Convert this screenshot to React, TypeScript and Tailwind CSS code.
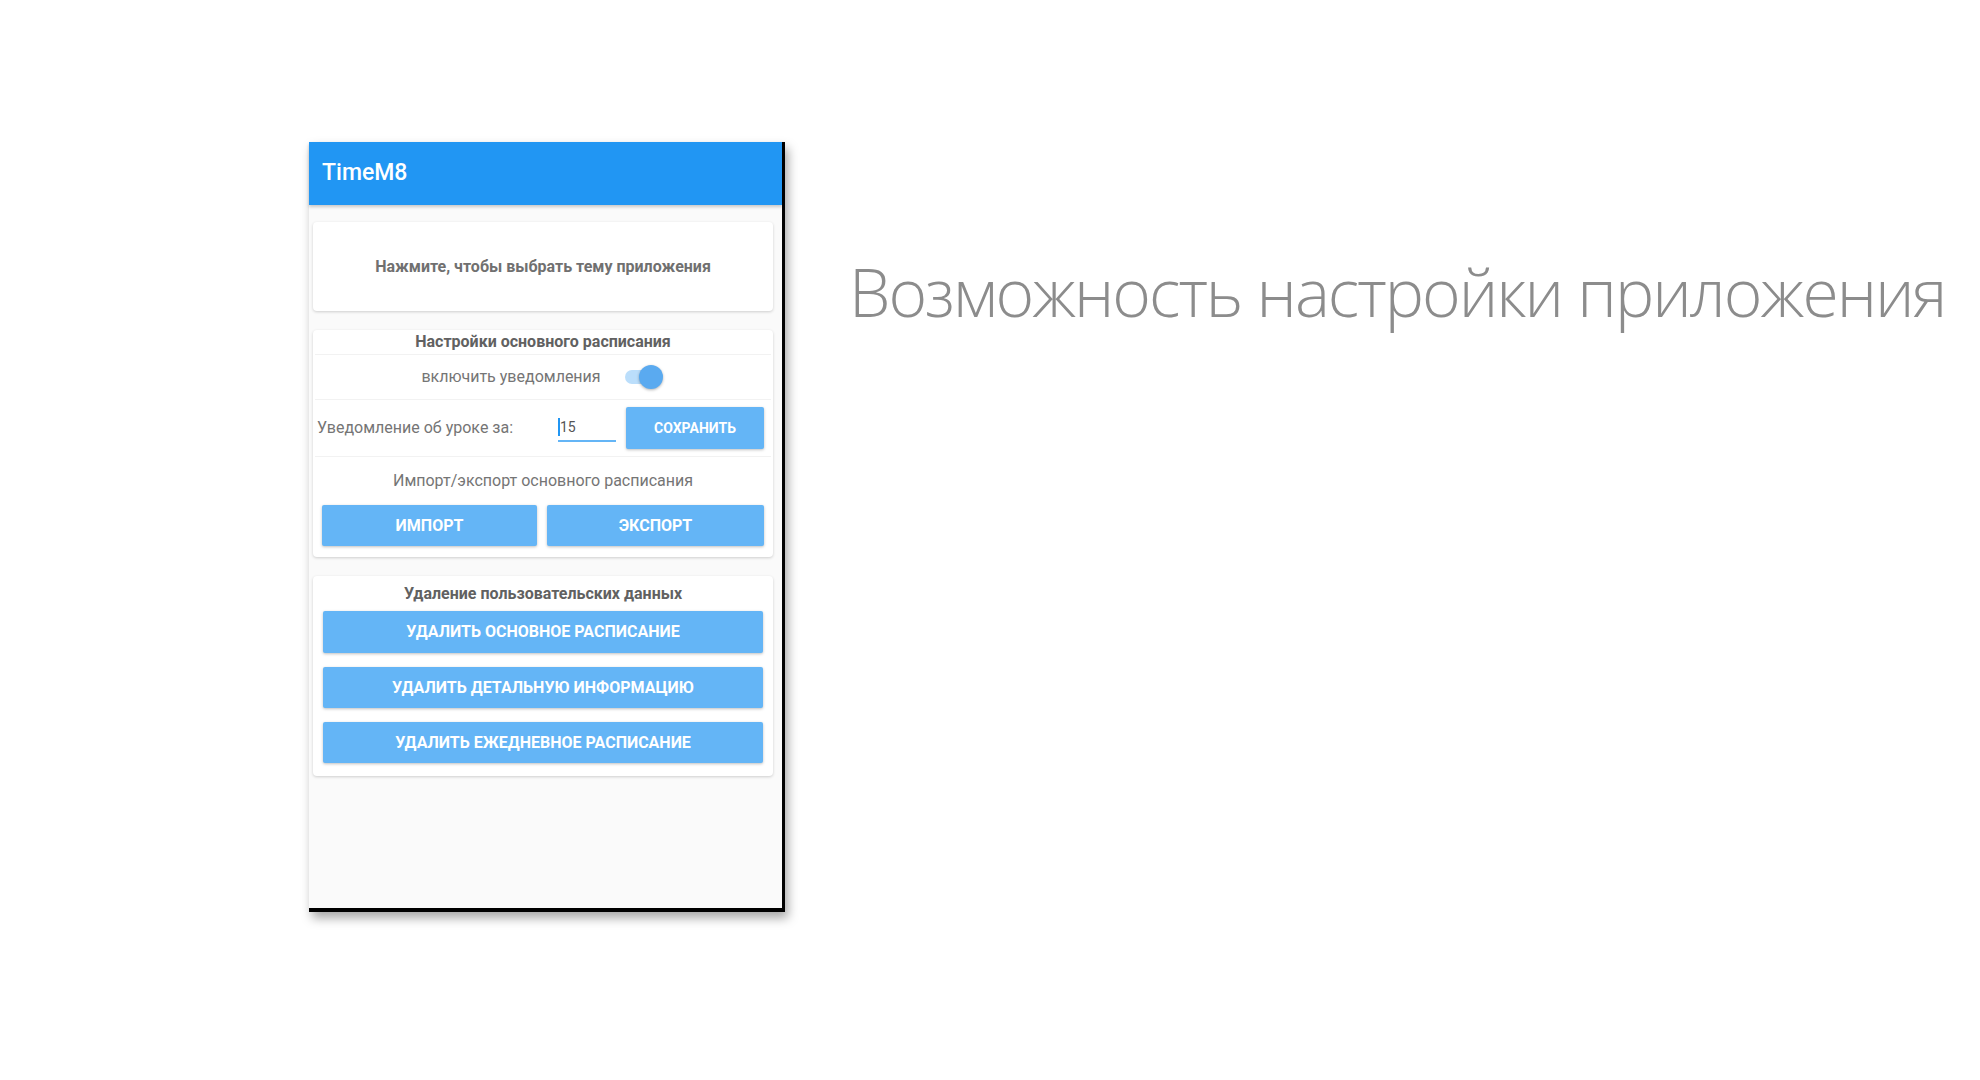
import React from 'react';

function BlueButton({ label, className }: { label: string; className?: string }) {
  return (
    <button
      className={`flex items-center justify-center rounded-[2px] bg-[#64b5f6] text-white font-bold uppercase shadow-[0_1px_3px_rgba(0,0,0,0.25)] ${className ?? ''}`}
    >
      {label}
    </button>
  );
}

function Card({ children, className }: { children: React.ReactNode; className?: string }) {
  return (
    <div className={`rounded-[4px] bg-white shadow-[0_1px_3px_rgba(0,0,0,0.18)] ${className ?? ''}`}>{children}</div>
  );
}

export default function App() {
  return (
    <div className="flex h-[1080px] w-full items-start bg-white pl-[309px] pt-[142px] font-['Roboto',sans-serif]">
      {/* phone */}
      <div className="flex h-[770px] w-[476px] shrink-0 flex-col border-b-[4px] border-r-[3px] border-black bg-[#fafafa] shadow-[3px_6px_10px_rgba(0,0,0,0.35)]">
        <header className="flex h-[63px] shrink-0 items-center bg-[#2196f3] pl-[13px] shadow-[0_2px_3px_rgba(0,0,0,0.2)]">
          <span className="text-[23px] font-medium text-white">TimeM8</span>
        </header>

        <div className="flex flex-col gap-[19px] pl-[4px] pr-[9px] pt-[17px]">
          <Card className="flex h-[89px] items-center justify-center">
            <span className="text-[16px] font-bold text-[#707070]">Нажмите, чтобы выбрать тему приложения</span>
          </Card>

          <Card className="flex flex-col">
            <div className="mx-[2px] flex h-[25px] items-center justify-center border-b border-[#f2f2f2]">
              <span className="text-[16px] font-bold text-[#616161]">Настройки основного расписания</span>
            </div>
            <div className="mx-[2px] flex h-[45px] items-center justify-center gap-[24px] border-b border-[#f2f2f2] pr-[6px]">
              <span className="text-[16px] text-[#757575]">включить уведомления</span>
              <div className="relative h-[14px] w-[34px] rounded-full bg-[#bbdefb]">
                <div className="absolute right-[-4px] top-[-5px] h-[24px] w-[24px] rounded-full bg-[#5aaaf0] shadow-[0_1px_3px_rgba(0,0,0,0.3)]" />
              </div>
            </div>
            <div className="mx-[2px] flex h-[57px] items-center border-b border-[#f2f2f2] pl-[2px] pr-[7px]">
              <span className="w-[241px] text-[16px] text-[#757575]">Уведомление об уроке за:</span>
              <div className="flex h-[28px] w-[58px] items-start border-b-2 border-[#64b5f6] pt-[4px]">
                <span className="h-[18px] w-[2px] bg-[#2196f3]" />
                <span className="text-[14px] leading-[18px] text-[#555]">15</span>
              </div>
              <BlueButton label="Сохранить" className="ml-auto h-[42px] w-[138px] text-[14px]" />
            </div>
            <div className="flex h-[48px] items-center justify-center">
              <span className="text-[16px] text-[#757575]">Импорт/экспорт основного расписания</span>
            </div>
            <div className="flex gap-[10px] px-[9px] pb-[11px]">
              <BlueButton label="Импорт" className="h-[41px] w-[215px] text-[16px]" />
              <BlueButton label="Экспорт" className="h-[41px] flex-1 text-[16px]" />
            </div>
          </Card>

          <Card className="flex flex-col px-[10px] pb-[13px]">
            <div className="flex h-[35px] items-center justify-center">
              <span className="text-[16px] font-bold text-[#616161]">Удаление пользовательских данных</span>
            </div>
            <div className="flex flex-col gap-[14px]">
              <BlueButton label="Удалить основное расписание" className="h-[42px] w-full text-[16px]" />
              <BlueButton label="Удалить детальную информацию" className="h-[41px] w-full text-[16px]" />
              <BlueButton label="Удалить ежедневное расписание" className="h-[41px] w-full text-[16px]" />
            </div>
          </Card>
        </div>
      </div>

      <h1 className="ml-[64px] mt-[116px] whitespace-nowrap font-['Open_Sans',sans-serif] text-[66px] font-light leading-none tracking-[-2px] text-[#8c8c8c]">
        Возможность настройки приложения
      </h1>
    </div>
  );
}
